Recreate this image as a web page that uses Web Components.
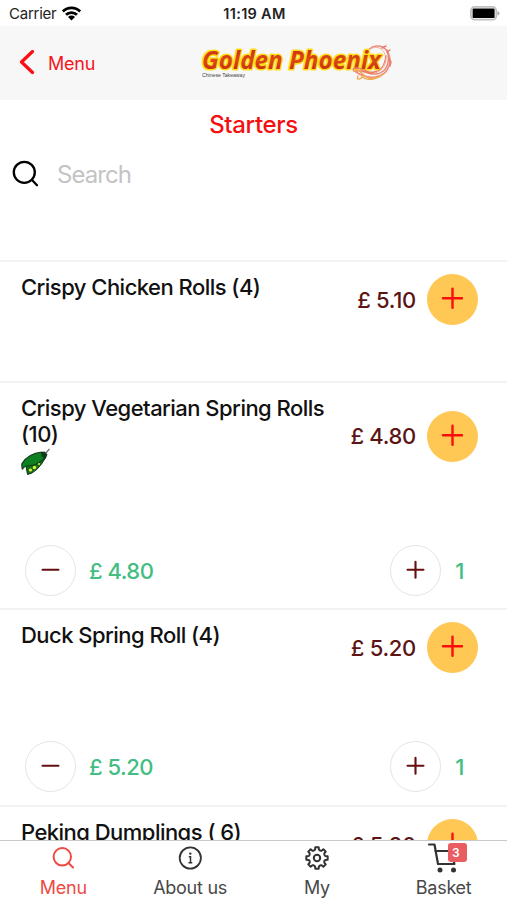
<!DOCTYPE html>
<html lang="en">
<head>
<meta charset="utf-8">
<title>Golden Phoenix</title>
<style>
html,body{margin:0;height:100%;overflow:hidden;background:#fff}
</style>
</head>
<body>
<takeaway-app></takeaway-app>
<script>
const define = (name, html, setup) => customElements.define(name, class extends HTMLElement {
  connectedCallback() {
    if (this.shadowRoot) return;
    const t = document.createElement('template');
    t.innerHTML = html;
    this.attachShadow({mode: 'open'}).append(t.content.cloneNode(true));
    if (setup) setup(this, this.shadowRoot);
  }
});

define('status-bar', `
<style>
:host{display:grid;grid-template-columns:1fr auto 1fr;align-items:center;height:26px;padding:1px 7px 0 9px;box-sizing:border-box;background:#fff;color:#222;font-size:15px}
.l{display:flex;align-items:center;gap:6px;letter-spacing:-.25px}
.t{font-weight:600;font-size:14.5px;letter-spacing:.3px}
.r{display:flex;justify-content:flex-end}
svg{display:block}
</style>
<div class="l"><span>Carrier</span>
<svg width="19" height="15" viewBox="0 0 19 15"><g fill="none" stroke="#000" stroke-width="2.8"><path d="M.8 5.400a12.300 12.300 0 0 1 17.400 0"/><path d="M4 8.800a7.800 7.800 0 0 1 11 0"/></g><path d="M9.500 14.400 6 11a5 5 0 0 1 7 0z"/></svg></div>
<div class="t">11:19 AM</div>
<div class="r"><svg width="30" height="15" viewBox="0 0 30 15"><rect x=".9" y=".9" width="25.400" height="12.800" rx="3.800" fill="#fff" stroke="#c0c0c0" stroke-width="1.800"/><rect x="2.600" y="2.500" width="22" height="9.600" rx="1.200"/><path d="M27.500 5v4.600q2-.7 2-2.300t-2-2.300" fill="#aaa"/></svg></div>`);

define('brand-logo', `
<style>:host{display:block}svg{display:block;overflow:visible}</style>
<svg width="194" height="42" viewBox="0 0 194 42">
<defs><linearGradient id="g" x1="0" y1="0" x2="0" y2="1"><stop offset="0" stop-color="#c4201a"/><stop offset=".55" stop-color="#dc4a12"/><stop offset="1" stop-color="#bd1d12"/></linearGradient></defs>
<g fill="none" stroke-linecap="round">
<path d="M166 13c3-10 15-12 21-4 6 9 2 22-8 25-9 3-17 0-23-4" stroke="#ee8d79" stroke-width="1.600"/>
<path d="M168 9c8-8 18-2 18 9-1 9-8 14-15 13" stroke="#f4b09c" stroke-width="1"/>
</g>
<text x="2" y="26.500" textLength="179" lengthAdjust="spacingAndGlyphs" font-family="'Open Sans',sans-serif" font-weight="730" font-style="italic" font-size="24.500" fill="url(#g)" stroke="#ffdf1c" stroke-width="3.200" stroke-linejoin="round" paint-order="stroke">Golden Phoenix</text>
<g fill="none" stroke-linecap="round">
<path d="M187 8c4 13-1 23-11 24-9 1-12-5-20-3-3 1-4-3-1-3 8-1 12 6 19 4 7-1 11-8 12-16" stroke="#ee8068" stroke-width="1.400"/>
<path d="M182 6l4-2M187 10l3-2M189 17l2 3-1 4" stroke="#ea7770" stroke-width="1.400"/>
<path d="M154 29c4-3 7 2 11 5 6 4 12 3 17-1M158 34c-2 4 2 4 4 1 4 3 10 3 14 1" stroke="#f2a84e" stroke-width="1.400"/>
</g>
<text x="2" y="34.500" textLength="43" lengthAdjust="spacingAndGlyphs" font-family="'Liberation Sans',sans-serif" font-size="5.300" fill="#444">Chinese Takeaway</text>
</svg>`);

define('nav-bar', `
<style>
:host{display:grid;grid-template-columns:200px 194px 1fr;align-items:center;height:74px;background:#f7f7f7;color:#f4161c}
.b{display:flex;align-items:center;gap:13px;padding-left:19px;font-size:18px;letter-spacing:-.25px}
svg{display:block}
</style>
<div class="b"><svg width="16" height="26" viewBox="0 0 16 26"><path d="M13.500 1.500 2.500 12l11 10.500" fill="none" stroke="#fb0d14" stroke-width="3.200" stroke-linecap="round" stroke-linejoin="round"/></svg><slot></slot></div>
<brand-logo></brand-logo>`);

define('search-field', `
<style>
:host{display:flex;align-items:center;height:50px;padding-left:12px;gap:17px;color:#c4c4c4;font-size:24px;letter-spacing:-.95px}
svg{display:block}
</style>
<svg width="28" height="28" viewBox="0 0 28 28"><g fill="none" stroke="#000" stroke-width="2.300" stroke-linecap="round"><circle cx="12.300" cy="12.300" r="10.500"/><path d="M19.800 19.800 25 25.200"/></g></svg>
<slot></slot>`);

define('round-button', `
<style>
:host{display:block;width:51px;height:51px;border-radius:50%;box-sizing:border-box;flex:none;border:1.5px solid #e4e4e4;color:#651010}
:host([filled]){background:#ffc753;border:0;color:#fb0d0d}
svg{display:block;width:100%;height:100%}
</style>
<svg viewBox="-25.500 -25.500 51 51"><path fill="none" stroke="currentColor" stroke-linecap="round"/></svg>`, (el, root) => {
  const p = root.querySelector('path');
  const filled = el.hasAttribute('filled');
  const r = filled ? 9.5 : 8.3, y = filled ? -1.2 : -.8;
  p.setAttribute('d', `M${-r} ${y}H${r}` + (el.getAttribute('kind') === 'minus' ? '' : `M0 ${y - r}V${y + r}`));
  p.setAttribute('stroke-width', filled ? 2.4 : 2.2);
});

define('menu-item', `
<style>
:host{display:block;box-sizing:border-box;border-top:2px solid #f2f2f2;padding:12px 29px 0 21px;font-size:22px;color:#111}
.main{display:flex;align-items:center}
.name{flex:1;align-self:flex-start;line-height:26px;font-weight:500;letter-spacing:-.53px}
.price{color:#5c1414;margin:0 11px;letter-spacing:-.3px;font-weight:450;white-space:nowrap}
.count{display:flex;align-items:center;padding-left:4px;margin-top:var(--gap,68px);color:#43bd82;font-weight:450;letter-spacing:-.5px}
.count .sum{flex:1;margin-left:13px}
.count .n{width:38px;text-align:center;margin-right:-1px;text-indent:-1px}
</style>
<div class="main"><div class="name"><slot></slot><slot name="mark"></slot></div><div class="price"></div><round-button filled></round-button></div>
<div class="count"><round-button kind="minus"></round-button><span class="sum"></span><round-button></round-button><span class="n"></span></div>`, (el, root) => {
  const price = '£ ' + el.getAttribute('price');
  root.querySelector('.price').textContent = price;
  const c = root.querySelector('.count');
  if (el.hasAttribute('count')) {
    c.querySelector('.sum').textContent = price;
    c.querySelector('.n').textContent = el.getAttribute('count');
  } else c.remove();
});

define('pea-pod', `
<style>:host{display:block;height:29px;padding-top:1px}svg{display:block}</style>
<svg width="30" height="28" viewBox="0 0 30 28"><path d="M24 6 28.500 .8" stroke="#666" stroke-width="1.200"/><path d="M5 18 6.500 26.500Q16 25 25 9l-3-4z" fill="#14711f" stroke="#102f14" stroke-width="1"/><path d="M1 15.500Q7 5.500 21 4L25 8Q18 17 10 17.500T1.500 21.500Q.4 18 1 15.500z" fill="#0d8022" stroke="#143518" stroke-width="1.100"/><path d="M20 4.200l3.500-.8 3 3-2 4-4-2z" fill="#123a1c"/><g fill="#dff02c"><circle cx="9.500" cy="22" r="1.600"/><circle cx="13.500" cy="19.500" r="1.700"/><circle cx="18" cy="16" r="1"/></g></svg>`);

define('tab-item', `
<style>
:host{display:flex;flex-direction:column;align-items:center;font-size:18px;color:#484848;letter-spacing:-.25px}
:host([active]){color:#ee4a42}
.i{height:34px;display:flex;align-items:center}
.t{line-height:24px;margin-top:1px}
</style>
<div class="i"><slot name="icon"></slot></div><div class="t"><slot></slot></div>`);

define('basket-icon', `
<style>
:host{display:block;position:relative;width:40px;height:32px}
svg{display:block}
b{position:absolute;left:24px;top:1px;width:19px;height:19px;border-radius:3px;background:#e95c61;color:#fff;font-size:12px;font-weight:600;line-height:19px;text-align:center;text-indent:-3px}
</style>
<svg width="40" height="32" viewBox="0 0 40 32"><g fill="none" stroke="#333" stroke-width="2.200" stroke-linecap="round" stroke-linejoin="round"><path d="M5 2.500h5.500L14 22H30.500"/><path d="M11.500 9H32l-2 12"/></g><circle cx="16" cy="28" r="2.500" fill="#333"/><circle cx="29.500" cy="28" r="2.500" fill="#333"/></svg><b>3</b>`);

define('tab-bar', `
<style>
:host{display:grid;grid-template-columns:repeat(4,1fr);height:60px;box-sizing:border-box;border-top:1px solid #c9c9c9;background:#fff}
svg{display:block}
</style>
<tab-item active><svg slot="icon" width="22" height="22" viewBox="0 0 22 22"><g fill="none" stroke="currentColor" stroke-width="2" stroke-linecap="round"><circle cx="10.300" cy="9.800" r="8.700"/><path d="m16.500 16 4.500 4.500"/></g></svg>Menu</tab-item>
<tab-item><svg slot="icon" width="24" height="24" viewBox="0 0 24 24"><circle cx="12.300" cy="12" r="10.600" fill="none" stroke="#333" stroke-width="1.800"/><circle cx="12.300" cy="7.600" r="1.200" fill="#333"/><path d="M10.800 10.800H12.500V16.500M10.500 16.800h3.800" fill="none" stroke="#333" stroke-width="1.500"/></svg>About us</tab-item>
<tab-item><svg slot="icon" width="24" height="24" viewBox="0 0 24 24"><path id="gear" fill="none" stroke="#333" stroke-width="2" stroke-linejoin="round"/><circle cx="12" cy="12" r="3.200" fill="none" stroke="#333" stroke-width="2"/></svg>My</tab-item>
<tab-item><basket-icon slot="icon"></basket-icon>Basket</tab-item>`, (el, root) => {
  // Eight-toothed gear outline: rounded lobes joined by shallow curved valleys.
  const pt = (deg, r) => {
    const t = deg * Math.PI / 180;
    return (12 + r * Math.sin(t)).toFixed(2) + ' ' + (12 - r * Math.cos(t)).toFixed(2);
  };
  let d = 'M' + pt(-13, 8.6);
  for (let i = 0; i < 8; i++) {
    const a = i * 45;
    d += 'L' + pt(a - 9, 10.8) + 'L' + pt(a + 9, 10.8) + 'L' + pt(a + 13, 8.6) + 'Q' + pt(a + 22.5, 7.4) + ' ' + pt(a + 32, 8.6);
  }
  root.querySelector('#gear').setAttribute('d', d + 'Z');
});

define('takeaway-app', `
<style>
:host{display:flex;flex-direction:column;width:507px;height:900px;overflow:hidden;font-family:Inter,"Liberation Sans",sans-serif;background:#fff}
status-bar,nav-bar,tab-bar,h1,search-field{flex:none}
h1{margin:0;height:49px;line-height:50px;text-align:center;color:#f4100f;font-size:24px;font-weight:450;letter-spacing:-.35px}
.list{flex:1;min-height:0;overflow:hidden;margin-top:61px}
menu-item{height:121px}
.b{height:227px;--gap:68px}
.c{height:197px;--gap:68px}
</style>
<status-bar></status-bar>
<nav-bar>Menu</nav-bar>
<h1>Starters</h1>
<search-field>Search</search-field>
<div class="list">
<menu-item price="5.10">Crispy Chicken Rolls (4)</menu-item>
<menu-item class="b" price="4.80" count="1">Crispy Vegetarian Spring Rolls (10)<pea-pod slot="mark"></pea-pod></menu-item>
<menu-item class="c" price="5.20" count="1">Duck Spring Roll (4)</menu-item>
<menu-item price="5.20">Peking Dumplings ( 6)</menu-item>
</div>
<tab-bar></tab-bar>`);
</script>
</body>
</html>
